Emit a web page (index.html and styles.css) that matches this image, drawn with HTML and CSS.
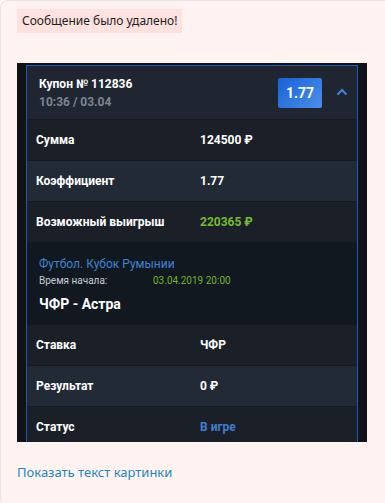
FILE: index.html
```html
<!DOCTYPE html>
<html>
  <head>
    <link rel="stylesheet" href="styles.css">
  </head>

  <body>

    <div class="post">
      <div class="notice">Сообщение было удалено!</div>

      <div class="shot">
        <div class="coupon">
          <div class="coupon-head">
            <div class="coupon-title">
              <div class="coupon-num">Купон № 112836</div>
              <div class="coupon-time">10:36 / 03.04</div>
            </div>
            <div class="coef-badge">1.77</div>
            <svg class="chevron" width="12" height="8" viewBox="0 0 12 8">
              <path d="M1.5 6.5 L6 2 L10.5 6.5" fill="none" stroke="#3d84e0" stroke-width="2"/>
            </svg>
          </div>

          <div class="row dark">
            <span class="label">Сумма</span>
            <span class="value">124500 ₽</span>
          </div>
          <div class="row light">
            <span class="label">Коэффициент</span>
            <span class="value">1.77</span>
          </div>
          <div class="row dark">
            <span class="label">Возможный выигрыш</span>
            <span class="value green">220365 ₽</span>
          </div>

          <div class="event">
            <div class="event-league">Футбол. Кубок Румынии</div>
            <div class="event-start">
              <span class="start-label">Время начала:</span>
              <span class="start-date">03.04.2019 20:00</span>
            </div>
            <div class="event-teams">ЧФР - Астра</div>
          </div>

          <div class="row dark">
            <span class="label">Ставка</span>
            <span class="value">ЧФР</span>
          </div>
          <div class="row light">
            <span class="label">Результат</span>
            <span class="value">0 ₽</span>
          </div>
          <div class="row dark">
            <span class="label">Статус</span>
            <span class="value blue">В игре</span>
          </div>
        </div>
      </div>

      <a class="show-text" href="#">Показать текст картинки</a>
    </div>

  </body>

</html>
```

FILE: styles.css
```css
body {
  margin: 0;
  background: #ffffff;
  font-family: "Noto Sans", "Open Sans", sans-serif;
}

.post {
  padding: 7px 0 24px 16px;
  background: #fff3f2;
  border: 1px solid #ebe3e2;
  border-right: none;
  border-radius: 8px 0 0 8px;
  min-height: 468px;
}

.notice {
  display: inline-block;
  height: 24px;
  line-height: 24px;
  padding: 0 5px;
  font-size: 12px;
  color: #1e1e1e;
  background: #fde2e0;
}

.shot {
  width: 332px;
  height: 377px;
  margin-top: 30px;
  padding: 2px 9px 0 9px;
  background: #0f1216;
  overflow: hidden;
}

.coupon {
  border: 1px solid #1d5bb8;
  border-bottom: none;
  height: 400px;
  font-family: Roboto, "Liberation Sans", sans-serif;
  color: #ffffff;
}

.coupon-head {
  display: flex;
  align-items: center;
  height: 53px;
  padding: 0 9px 0 12px;
  background: #1f2632;
}

.coupon-title {
  flex: 1;
  padding-top: 1px;
}

.coupon-num {
  font-size: 12px;
  font-weight: 700;
  line-height: 18px;
}

.coupon-time {
  font-size: 12px;
  font-weight: 700;
  line-height: 18px;
  color: #7d8592;
}

.coef-badge {
  width: 44px;
  height: 30px;
  line-height: 30px;
  text-align: center;
  font-size: 14px;
  font-weight: 700;
  border-radius: 2px;
  background: linear-gradient(135deg, #1762d8, #4b8fe8);
}

.chevron {
  margin: 0 0 2px 14px;
}

.row {
  display: grid;
  grid-template-columns: 164px 1fr;
  align-items: center;
  height: 40px;
  padding-left: 9px;
  border-top: 1px solid #151a21;
  font-size: 12px;
  font-weight: 700;
}

.row.dark {
  background: #1a1f28;
}

.row.light {
  background: #222a36;
}

.green {
  color: #74bd2c;
}

.blue {
  color: #3d7fd2;
}

.event {
  height: 81px;
  padding: 0 12px;
  border-top: 1px solid #151a21;
  background: #121820;
}

.event-league {
  padding-top: 12px;
  font-size: 12px;
  line-height: 18px;
  color: #3f83d2;
}

.event-start {
  display: flex;
  font-size: 10px;
  line-height: 16px;
  color: #c9cdd3;
}

.start-label {
  width: 114px;
}

.start-date {
  color: #6fb52a;
}

.event-teams {
  margin-top: 5px;
  font-size: 14px;
  font-weight: 700;
  line-height: 20px;
}

.show-text {
  display: inline-block;
  margin-top: 21px;
  font-size: 13px;
  line-height: 18px;
  color: #1b87bd;
  text-decoration: none;
}
```
